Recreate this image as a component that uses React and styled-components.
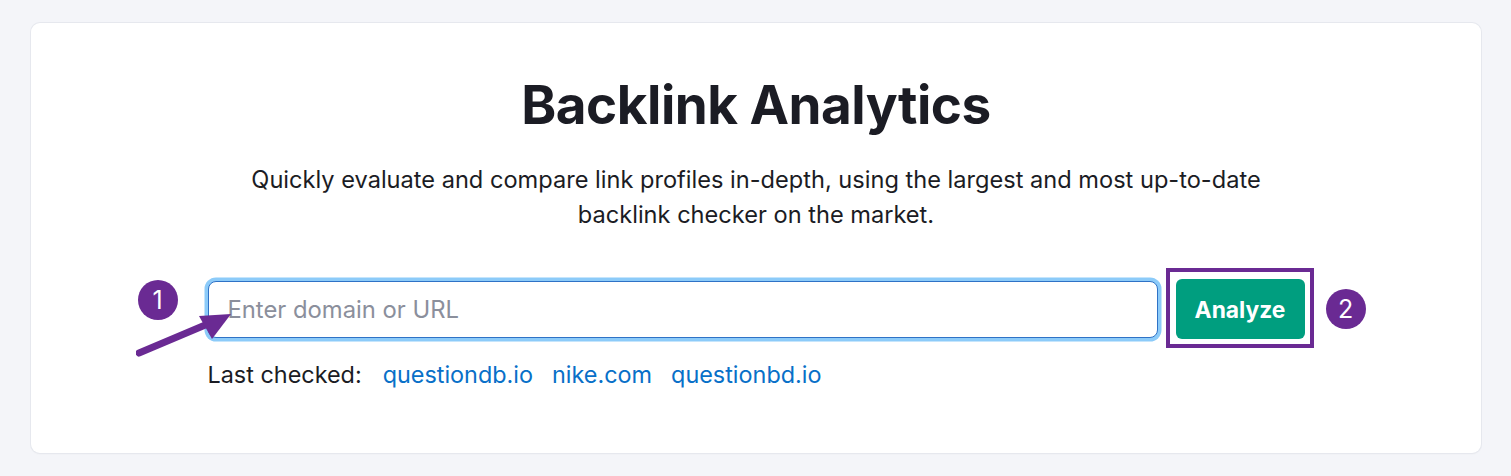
import React from "react";
import styled, { createGlobalStyle } from "styled-components";

const GlobalStyle = createGlobalStyle`
  body {
    margin: 0;
    background: #f4f5f9;
    font-family: 'Inter', 'Liberation Sans', sans-serif;
  }
`;

const App = () => {
  return (
    <>
      <GlobalStyle />
      <Page>
        <Card>
          <Title>Backlink Analytics</Title>
          <Lead>
            Quickly evaluate and compare link profiles in-depth, using the largest and most up-to-date
            <br />
            backlink checker on the market.
          </Lead>
          <Form>
            <InputRow>
              <Field placeholder="Enter domain or URL" />
              <ButtonFrame>
                <AnalyzeButton>Analyze</AnalyzeButton>
              </ButtonFrame>
              <Step $left="-70px" $top="1px">1</Step>
              <Step $left="1118px" $top="10px">2</Step>
              <Arrow width="100" height="52" viewBox="0 0 100 52">
                <line x1="3" y1="47" x2="74" y2="17" stroke="#6a2a93" strokeWidth="7" strokeLinecap="round" />
                <polygon points="95,8 63,10 76,33" fill="#6a2a93" />
              </Arrow>
            </InputRow>
            <Recent>
              <RecentLabel>Last checked:</RecentLabel>
              <RecentLink href="#">questiondb.io</RecentLink>
              <RecentLink href="#">nike.com</RecentLink>
              <RecentLink href="#">questionbd.io</RecentLink>
            </Recent>
          </Form>
        </Card>
      </Page>
    </>
  );
};

const Page = styled.div`
  padding: 23px 30px 23px 31px;
`;

const Card = styled.div`
  background: #fff;
  border-radius: 9px;
  box-shadow: 0 0 0 1px #e6e8ee, 0 1px 2px rgba(0, 0, 0, 0.06);
  height: 430px;
  box-sizing: border-box;
  padding-top: 50px;
  display: flex;
  flex-direction: column;
  align-items: center;
`;

const Title = styled.h1`
  margin: 0;
  font-size: 53px;
  line-height: 64px;
  font-weight: 700;
  color: #1b1c24;
  letter-spacing: -0.5px;
`;

const Lead = styled.p`
  margin: 25px 0 0;
  font-size: 23.6px;
  line-height: 35px;
  color: #1b1c24;
  text-align: center;
`;

const Form = styled.div`
  width: 1097px;
  margin-top: 47px;
`;

const InputRow = styled.div`
  position: relative;
  display: flex;
  align-items: center;
  gap: 18px;
`;

const Field = styled.input`
  flex: 1;
  height: 57px;
  box-sizing: border-box;
  border: 1.5px solid #2f72c6;
  border-radius: 8px;
  box-shadow: 0 0 0 3.5px #8ccbf9;
  padding: 0 19px;
  font-family: 'Inter', 'Liberation Sans', sans-serif;
  font-size: 23.8px;
  color: #1b1c24;
  outline: none;

  &::placeholder {
    color: #8b8f9c;
  }
`;

const ButtonFrame = styled.div`
  position: relative;
  display: flex;
`;

const AnalyzeButton = styled.button`
  height: 60px;
  width: 129px;
  padding: 0;
  border: none;
  border-radius: 6px;
  background: #009e7f;
  color: #fff;
  font-family: 'Inter', 'Liberation Sans', sans-serif;
  font-size: 22.8px;
  font-weight: 700;
  cursor: pointer;

  &::after {
    content: '';
    position: absolute;
    inset: -11px -9px -9px -10px;
    border: 4px solid #6a2a93;
    pointer-events: none;
  }
`;

const Step = styled.div`
  position: absolute;
  left: ${(p) => p.$left};
  top: ${(p) => p.$top};
  width: 40px;
  height: 40px;
  border-radius: 50%;
  background: #6a2a93;
  color: #fff;
  font-size: 25px;
  display: flex;
  align-items: center;
  justify-content: center;
`;

const Arrow = styled.svg`
  position: absolute;
  left: -72px;
  top: 27px;
`;

const Recent = styled.div`
  display: flex;
  align-items: baseline;
  gap: 19px;
  margin-top: 21px;
  font-size: 23.4px;
`;

const RecentLabel = styled.span`
  color: #1b1c24;
  margin-right: 2px;
`;

const RecentLink = styled.a`
  color: #0870c8;
  text-decoration: none;
`;

export default App;
